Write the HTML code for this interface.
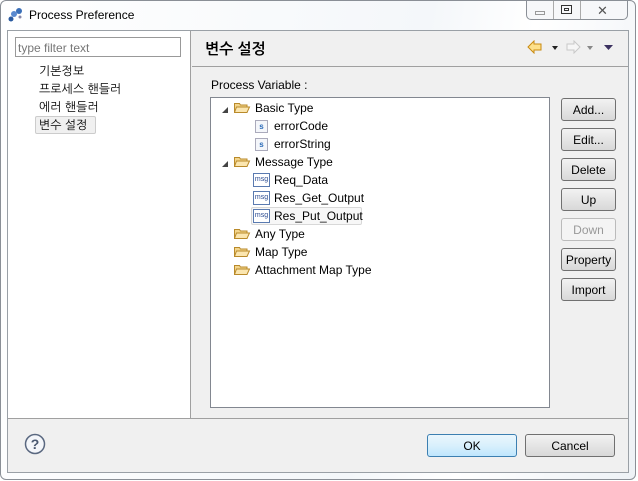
<!DOCTYPE html>
<html><head><style>
*{margin:0;padding:0;box-sizing:border-box}
body{width:638px;height:481px;background:#fff;font-family:"Liberation Sans","NanumGothic",sans-serif;font-size:12px;color:#000;position:relative;overflow:hidden}
.abs{position:absolute}
.frame{left:0;top:0;width:636px;height:480px;border:1px solid #8a8f96;border-radius:6px;background:linear-gradient(100deg,#fff 0%,#f4f7fa 60%,#fff 75%,#eef2f6 100%)}
.client{left:7px;top:30px;width:622px;height:443px;border:1px solid #9aa0a6;background:#f0f0f0}
.btn{position:absolute;left:561px;width:55px;height:23px;border:1px solid #707070;border-radius:3px;background:linear-gradient(#f2f2f2,#e5e5e5 50%,#d8d8d8);text-align:center;line-height:22px;font-size:12px}
.t{position:absolute;white-space:nowrap;margin-top:1px}
.ico{position:absolute;width:13px;height:13px;border:1px solid #aab;background:#f4f6fa;font-size:8px;color:#2a6ab8;font-weight:bold;text-align:center;line-height:11px}
.msg{position:absolute;width:17px;height:14px;border:1px solid #5a7ab0;background:#fff;font-size:7px;color:#2a4a90;text-align:center;line-height:12px}
</style></head><body>
<div class="abs frame"></div>
<svg class="abs" style="left:8px;top:7px" width="16" height="16"><circle cx="11" cy="4" r="3" fill="#3a6fb8"/><circle cx="6" cy="7" r="3" fill="#5a8ad0"/><circle cx="3" cy="12" r="2.5" fill="#2a5aa0"/><circle cx="12" cy="10" r="1.5" fill="#88a"/></svg>
<div class="t" style="left:29px;top:7px;font-size:12px">Process Preference</div>
<div class="abs" style="left:526px;top:1px;width:102px;height:19px;border:1px solid #8a8f96;border-top:none;border-radius:0 0 5px 5px;background:#f6f7f9"></div>
<div class="abs" style="left:553px;top:1px;width:1px;height:18px;background:#aaa"></div>
<div class="abs" style="left:580px;top:1px;width:1px;height:18px;background:#aaa"></div>
<div class="abs" style="left:535px;top:11px;width:10px;height:4px;border:1px solid #999"></div>
<div class="abs" style="left:561px;top:5px;width:11px;height:9px;border:1px solid #333"><div style="margin:2px;height:3px;border:1px solid #333"></div></div>
<div class="t" style="left:597px;top:2px;font-size:13px;color:#555">✕</div>
<div class="abs client"></div>
<div class="abs" style="left:8px;top:31px;width:183px;height:387px;background:#fff;border-right:1px solid #a0a0a0"></div>
<div class="abs" style="left:15px;top:37px;width:166px;height:20px;border:1px solid #999;background:#fff"></div>
<div class="t" style="left:18px;top:40px;color:#777">type filter text</div>
<div class="t" style="left:39px;top:63px">기본정보</div>
<div class="t" style="left:39px;top:81px">프로세스 핸들러</div>
<div class="t" style="left:39px;top:99px">에러 핸들러</div>
<div class="abs" style="left:35px;top:116px;width:61px;height:18px;border:1px solid #ccc;border-radius:2px;background:#f0f0f0"></div>
<div class="t" style="left:39px;top:117px">변수 설정</div>
<div class="abs" style="left:192px;top:66px;width:436px;height:1px;background:#a0a0a0"></div>
<div class="t" style="left:205px;top:40px;font-size:15px;font-weight:bold">변수 설정</div>
<svg class="abs" style="left:527px;top:40px" width="90" height="14"><path d="M1 7 L7 1 V4 H14 V10 H7 V13 Z" fill="#fde08a" stroke="#c98a10"/><path d="M25 6h6l-3 4z" fill="#222"/><path d="M53 7 L47 1 V4 H40 V10 H47 V13 Z" fill="#f6f6f6" stroke="#c8c8c8"/><path d="M60 6h6l-3 4z" fill="#888"/><path d="M77 5h9l-4.5 5z" fill="#3b3160"/></svg>
<div class="t" style="left:211px;top:77px">Process Variable :</div>
<div class="abs" style="left:210px;top:97px;width:340px;height:311px;border:1px solid #828790;background:#fff"></div>
<svg class="abs" style="left:220px;top:104px" width="12" height="12"><path d="M2 9H8V3z" fill="#444"/></svg>
<svg class="abs" style="left:220px;top:158px" width="12" height="12"><path d="M2 9H8V3z" fill="#444"/></svg>
<svg width="0" height="0" style="position:absolute"><defs><g id="f"><path d="M0.5 2.5h5l1 1.5h6.5v7.5h-12.5z" fill="#f3d58c" stroke="#b98a2a"/><path d="M2.5 6h13l-2.5 5.5h-12.5z" fill="#fbe6b0" stroke="#b98a2a"/></g></defs></svg>
<svg class="abs" style="left:234px;top:101px" width="17" height="13"><use href="#f"/></svg>
<svg class="abs" style="left:234px;top:155px" width="17" height="13"><use href="#f"/></svg>
<svg class="abs" style="left:234px;top:227px" width="17" height="13"><use href="#f"/></svg>
<svg class="abs" style="left:234px;top:245px" width="17" height="13"><use href="#f"/></svg>
<svg class="abs" style="left:234px;top:263px" width="17" height="13"><use href="#f"/></svg>
<div class="t" style="left:255px;top:100px">Basic Type</div>
<div class="ico" style="left:255px;top:120px">s</div><div class="t" style="left:274px;top:118px">errorCode</div>
<div class="ico" style="left:255px;top:138px">s</div><div class="t" style="left:274px;top:136px">errorString</div>
<div class="t" style="left:255px;top:154px">Message Type</div>
<div class="msg" style="left:253px;top:173px">msg</div><div class="t" style="left:274px;top:172px">Req_Data</div>
<div class="msg" style="left:253px;top:191px">msg</div><div class="t" style="left:274px;top:190px">Res_Get_Output</div>
<div class="abs" style="left:251px;top:207px;width:111px;height:18px;border:1px solid #d8d8d8;border-radius:2px;background:#f7f7f7"></div>
<div class="msg" style="left:253px;top:209px">msg</div><div class="t" style="left:274px;top:208px">Res_Put_Output</div>
<div class="t" style="left:255px;top:226px">Any Type</div>
<div class="t" style="left:255px;top:244px">Map Type</div>
<div class="t" style="left:255px;top:262px">Attachment Map Type</div>
<div class="btn" style="top:98px">Add...</div>
<div class="btn" style="top:128px">Edit...</div>
<div class="btn" style="top:158px">Delete</div>
<div class="btn" style="top:188px">Up</div>
<div class="btn" style="top:218px;color:#999;border-color:#bbb;background:#f4f4f4">Down</div>
<div class="btn" style="top:248px">Property</div>
<div class="btn" style="top:278px">Import</div>
<div class="abs" style="left:8px;top:418px;width:620px;height:1px;background:#a0a0a0"></div>
<svg class="abs" style="left:24px;top:433px" width="22" height="22"><circle cx="11" cy="11" r="9.5" fill="#f4f6fa" stroke="#5a6880" stroke-width="1.5"/><text x="11" y="16" font-size="14" font-weight="bold" text-anchor="middle" fill="#4a5870" font-family="Liberation Sans">?</text></svg>
<div class="btn" style="left:427px;top:434px;width:90px;border-color:#3c7fb1;background:linear-gradient(#eaf6fd,#d9f0fc 50%,#bee6fd)">OK</div>
<div class="btn" style="left:525px;top:434px;width:90px">Cancel</div>
</body></html>
